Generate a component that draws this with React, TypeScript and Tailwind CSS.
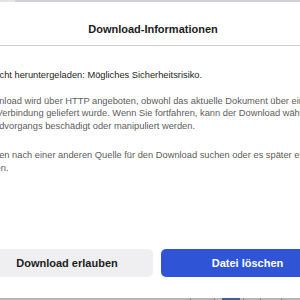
export default function App() {
  return (
    <div className="w-[300px] h-[300px] overflow-hidden bg-white flex flex-col" style={{ fontFamily: '"Liberation Sans", Arial, sans-serif' }}>
      {/* window edge above the dialog */}
      <div className="h-[2px] flex shrink-0">
        <div className="w-[15px] bg-[#e4e4e7]" />
        <div className="flex-1 bg-[#d2d2d6]" />
      </div>

      <div className="ml-[-44px] w-[394px] flex-1 flex flex-col">
        <div className="h-[44px] border-b border-[#cfcfcf] flex items-start justify-center pt-[20px]">
          <h1 className="text-[11px] leading-[14px] font-bold text-[#1c1c1c]">Download-Informationen</h1>
        </div>

        <div className="pl-[7px] pt-[23px] text-[9.3px] leading-[12.5px] whitespace-nowrap">
          <p className="pl-[5px] text-[#1e1e1e]">Datei nicht heruntergeladen: Mögliches Sicherheitsrisiko.</p>
          <p className="mt-[13px] text-[#5c5c5c]">
            Der Download wird über HTTP angeboten, obwohl das aktuelle Dokument über eine sichere
            <br />
            HTTPS-Verbindung geliefert wurde. Wenn Sie fortfahren, kann der Download während des
            <br />
            Downloadvorgangs beschädigt oder manipuliert werden.
          </p>
          <p className="mt-[17px] text-[#5c5c5c]">
            Sie können nach einer anderen Quelle für den Download suchen oder es später erneut
            <br />
            versuchen.
          </p>
        </div>

        <div className="mt-auto mb-[21px] pl-[25px] flex gap-[8px]">
          <button className="w-[172px] h-[28px] rounded-[5px] bg-[#efeff1] text-[11px] font-bold text-[#1c1c1c]">
            Download erlauben
          </button>
          <button className="w-[173px] h-[28px] rounded-[5px] bg-[#2f55d6] text-[11px] font-bold text-white">
            Datei löschen
          </button>
        </div>
      </div>

      {/* taskbar strip below the dialog */}
      <div className="h-[2px] shrink-0 flex bg-[#b6b6b6]">
        <div className="w-[190px]" />
        <div className="w-px bg-[#8c8c8c]" />
        <div className="w-[23px]" />
        <div className="w-px bg-[#8c8c8c]" />
        <div className="w-[7px]" />
        <div className="w-[18px] bg-[#3d6390]" />
        <div className="w-[3px]" />
        <div className="w-px bg-[#8c8c8c]" />
        <div className="w-[16px]" />
        <div className="w-px bg-[#8c8c8c]" />
        <div className="w-[20px]" />
        <div className="w-px bg-[#8c8c8c]" />
      </div>
    </div>
  );
}
